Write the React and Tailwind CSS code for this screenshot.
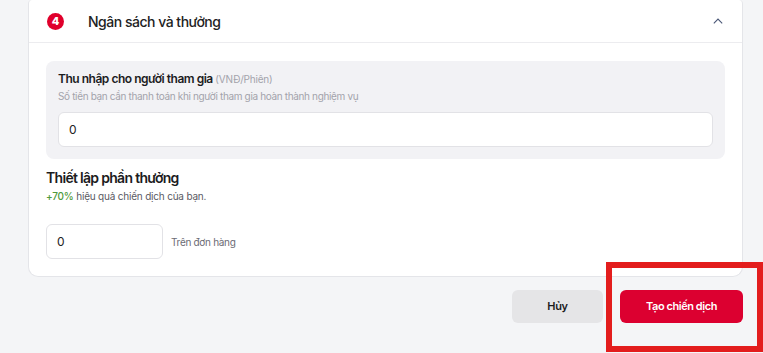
export default function App() {
  return (
    <div className="relative h-[353px] w-[763px] overflow-hidden bg-[#f4f5f7] font-['Inter',sans-serif] text-[#1c1c1e]">
      <div className="pl-[28px] pr-[20px]">
        {/* Card */}
        <div className="rounded-b-[10px] rounded-t-[4px] border border-t-0 border-[#e4e5e9] bg-white">
          <div className="flex h-[43px] items-center border-b border-[#ececef] pl-[18px] pr-[19px]">
            <div className="flex h-[17px] w-[17px] items-center justify-center rounded-full bg-[#e0002b] text-[11px] font-extrabold leading-none text-white">
              4
            </div>
            <div className="ml-[24px] text-[14px] font-medium tracking-[-0.035em] text-[#222]">Ngân sách và thưởng</div>
            <svg viewBox="0 0 10 6" className="ml-auto h-[6px] w-[10px]" fill="none" stroke="#4b5877" strokeWidth="1.1">
              <path d="M0.8 5.3 L5 1 L9.2 5.3" />
            </svg>
          </div>

          <div className="px-[17px] pb-[17px] pt-[18px]">
            <div className="rounded-[8px] bg-[#f2f2f5] px-[12px] pb-[12px] pt-[10px]">
              <div className="text-[12px] font-semibold leading-[16px] tracking-[-0.04em] text-[#1c1c1e]">
                Thu nhập cho người tham gia{" "}
                <span className="text-[10px] font-normal tracking-[-0.02em] text-[#a3a3ab]">(VNĐ/Phiên)</span>
              </div>
              <div className="mt-[2px] text-[10px] leading-[14px] tracking-[-0.035em] text-[#a3a3ab]">
                Số tiền bạn cần thanh toán khi người tham gia hoàn thành nghiệm vụ
              </div>
              <div className="mt-[9px] flex h-[35px] items-center rounded-[6px] border border-[#e2e2e6] bg-white px-[10px] text-[12px] text-[#222]">
                0
              </div>
            </div>

            <div className="mt-[9px] text-[14px] font-semibold leading-[20px] tracking-[-0.05em] text-[#1c1c1e]">Thiết lập phần thưởng</div>
            <div className="mt-[1px] text-[10px] leading-[14px] tracking-[-0.02em] text-[#5a5a63]">
              <span className="font-medium text-[#4f9a3c]">+70%</span> hiệu quả chiến dịch của bạn.
            </div>
            <div className="mt-[21px] flex items-center gap-[8px]">
              <div className="flex h-[35px] w-[117px] items-center rounded-[6px] border border-[#e2e2e6] bg-white px-[10px] text-[12px] text-[#222]">
                0
              </div>
              <div className="pt-[2px] text-[10px] tracking-[-0.03em] text-[#6b6b74]">Trên đơn hàng</div>
            </div>
          </div>
        </div>

        {/* Actions */}
        <div className="mt-[13px] flex justify-end gap-[17px]">
          <button className="h-[33px] w-[91px] rounded-[6px] bg-[#e5e5e7] text-[11px] font-semibold tracking-[-0.03em] text-[#1c1c1e]">Hủy</button>
          <button className="h-[33px] w-[123px] rounded-[6px] bg-[#dc0030] text-[11px] font-semibold tracking-[-0.04em] text-white">Tạo chiến dịch</button>
        </div>
      </div>

      {/* Annotation highlight */}
      <div className="pointer-events-none absolute left-[606px] top-[262px] h-[90px] w-[157px] border-[6px] border-[#e31d1d]" />
    </div>
  );
}
